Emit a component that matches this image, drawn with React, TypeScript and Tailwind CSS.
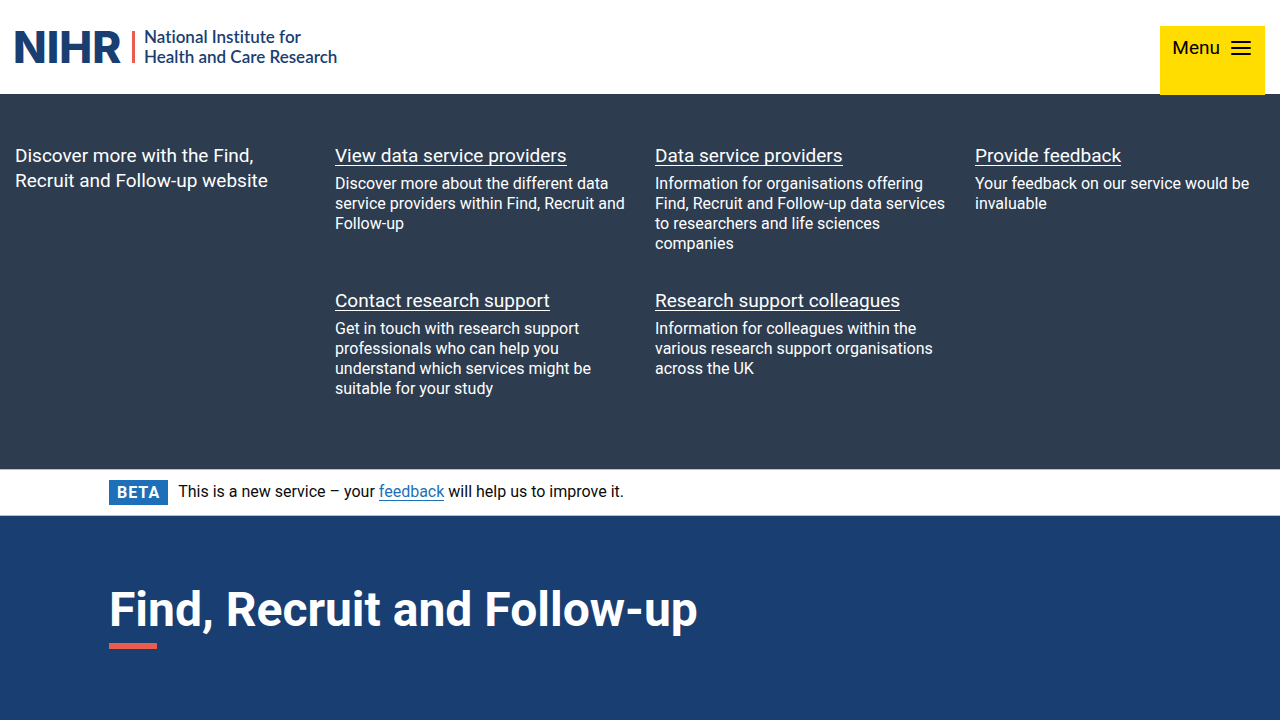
const serviceLinks = [
  {
    title: "View data service providers",
    text: "Discover more about the different data service providers within Find, Recruit and Follow-up",
  },
  {
    title: "Data service providers",
    text: "Information for organisations offering Find, Recruit and Follow-up data services to researchers and life sciences companies",
  },
  {
    title: "Provide feedback",
    text: "Your feedback on our service would be invaluable",
  },
  {
    title: "Contact research support",
    text: "Get in touch with research support professionals who can help you understand which services might be suitable for your study",
  },
  {
    title: "Research support colleagues",
    text: "Information for colleagues within the various research support organisations across the UK",
  },
];

function Logo() {
  return (
    <a
      href="#"
      aria-label="NIHR National Institute for Health and Care Research"
      className="-ml-[2px] flex items-center text-[#193e72]"
    >
      <span className="w-[119px] font-['Inter',sans-serif] text-[44px] leading-8 font-extrabold">
        NIHR
      </span>
      <span className="h-8 w-[3px] bg-[#ea5d4e]" />
      <span className="ml-[9px] font-['Lato',sans-serif] text-[17px] leading-5 font-semibold whitespace-nowrap [font-variant-ligatures:none]">
        National Institute for
        <br />
        Health and Care Research
      </span>
    </a>
  );
}

function Header() {
  return (
    <header className="flex h-[94px] items-start justify-between px-[15px]">
      <div className="pt-[27px]">
        <Logo />
      </div>
      <button
        type="button"
        aria-expanded="true"
        className="z-10 mt-[26px] flex h-[69px] items-start gap-[11px] bg-[#ffdd00] pt-2 pr-[14px] pl-3 text-[19px] leading-7 text-black"
      >
        Menu
        <svg width="20" height="14" viewBox="0 0 20 14" className="mt-[7px]" aria-hidden="true">
          <path d="M1 1h18M1 7h18M1 13h18" stroke="currentColor" strokeWidth="2" strokeLinecap="round" />
        </svg>
      </button>
    </header>
  );
}

function MenuPanel() {
  return (
    <nav
      aria-label="Menu"
      className="grid grid-cols-4 bg-[#2d3c4f] pt-[49px] pb-9 text-white"
    >
      <p className="px-[15px] text-[19px] leading-[25px]">
        Discover more with the Find, Recruit and Follow-up website
      </p>
      <ul className="col-span-3 grid grid-cols-3">
        {serviceLinks.map((link) => (
          <li key={link.title} className="px-[15px] pb-[34px]">
            <div className="text-[19px] leading-[25px]">
              <a href="#" className="inline-block h-[23px] border-b border-white">
                {link.title}
              </a>
            </div>
            <p className="mt-[6px] text-base leading-5">{link.text}</p>
          </li>
        ))}
      </ul>
    </nav>
  );
}

function BetaBanner() {
  return (
    <div className="border-y border-[#b8c0c6] bg-white">
      <div className="mx-auto flex max-w-[1062px] items-start gap-[10px] py-[10px]">
        <strong className="bg-[#1d70b8] px-2 text-base leading-[25px] font-bold tracking-[1px] text-white">
          BETA
        </strong>
        <p className="text-base leading-6 text-[#0b0c0c]">
          This is a new service – your{" "}
          <a href="#" className="inline-block border-b border-[#1d70b8] leading-[17px] text-[#1d70b8]">
            feedback
          </a>{" "}
          will help us to improve it.
        </p>
      </div>
    </div>
  );
}

export default function App() {
  return (
    <div className="flex min-h-screen flex-col bg-white font-['Roboto',sans-serif]">
      <Header />
      <MenuPanel />
      <BetaBanner />
      <main className="flex-1 bg-[#193e72] pt-[66px] pb-[71px] text-white">
        <div className="mx-auto max-w-[1062px]">
          <h1 className="text-5xl leading-[56px] font-bold">Find, Recruit and Follow-up</h1>
          <div className="mt-[5px] h-[6px] w-12 bg-[#ea5d4e]" />
        </div>
      </main>
    </div>
  );
}
